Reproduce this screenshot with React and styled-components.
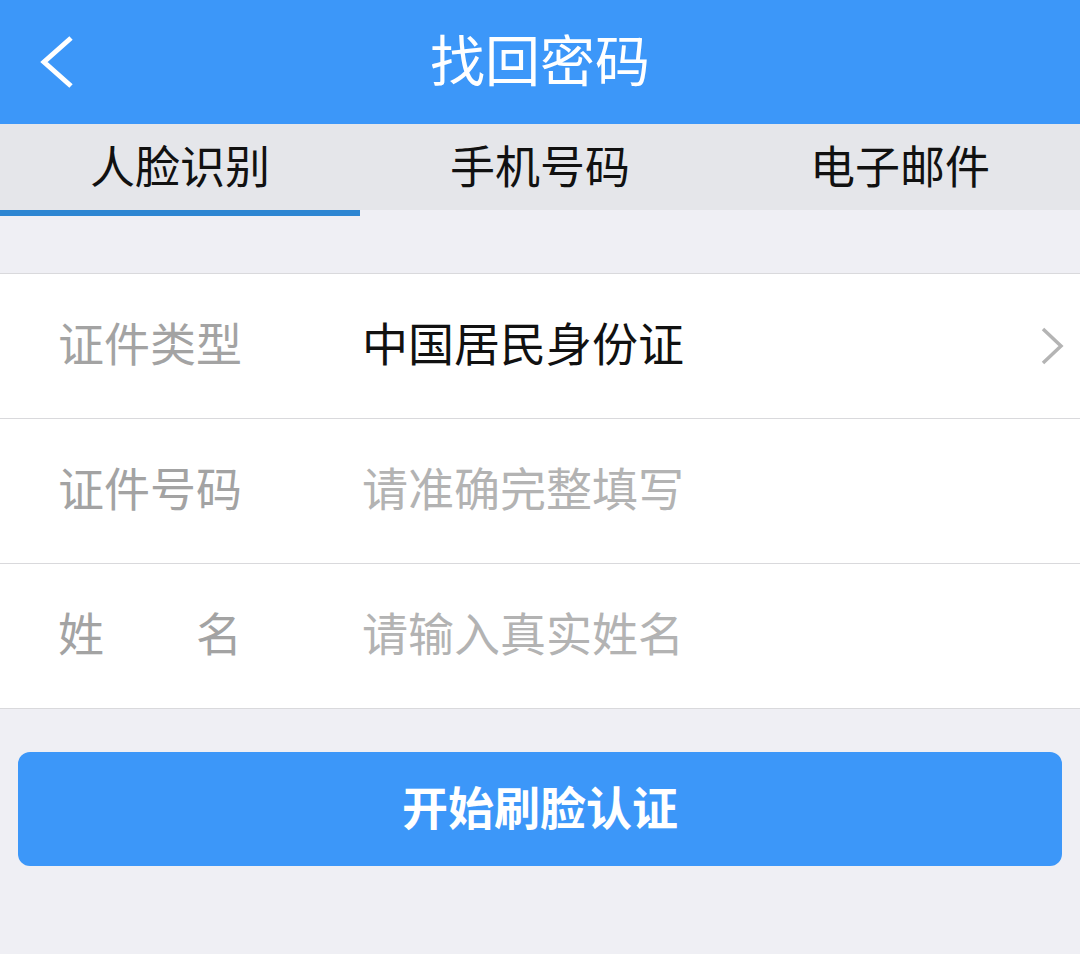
import React, { useState } from "react";
import styled, { createGlobalStyle } from "styled-components";

const GlobalStyle = createGlobalStyle`
  html, body {
    margin: 0;
    padding: 0;
    background: #efeff4;
  }
  body {
    font-family: "Noto Sans CJK SC", "Noto Sans", sans-serif;
  }
`;

const tabs = ["人脸识别", "手机号码", "电子邮件"];

const rows = [
  { label: "证件类型", value: "中国居民身份证", arrow: true },
  { label: "证件号码", placeholder: "请准确完整填写" },
  { label: "姓名", placeholder: "请输入真实姓名" },
];

const App = () => {
  const [active, setActive] = useState(0);

  return (
    <StPage>
      <GlobalStyle />
      <StHeader>
        <StBack aria-label="返回">
          <svg width="40" height="56" viewBox="0 0 40 56">
            <polyline
              points="33,4 6,28 33,52"
              fill="none"
              stroke="#fff"
              strokeWidth="5"
              strokeLinecap="butt"
              strokeLinejoin="miter"
            />
          </svg>
        </StBack>
        <StTitle>找回密码</StTitle>
      </StHeader>

      <StTabBar>
        {tabs.map((t, i) => (
          <StTab key={t} $active={i === active} onClick={() => setActive(i)}>
            {t}
          </StTab>
        ))}
      </StTabBar>

      <StForm>
        {rows.map(r => (
          <StRow key={r.label}>
            <StLabel>{r.label}</StLabel>
            {r.value ? (
              <StValue>{r.value}</StValue>
            ) : (
              <StInput type="text" placeholder={r.placeholder} />
            )}
            {r.arrow && (
              <StArrow width="26" height="40" viewBox="0 0 26 40">
                <polyline
                  points="3,3 21,20 3,37"
                  fill="none"
                  stroke="#b4b4b4"
                  strokeWidth="3.5"
                />
              </StArrow>
            )}
          </StRow>
        ))}
      </StForm>

      <StSubmit type="button">开始刷脸认证</StSubmit>
    </StPage>
  );
};

export default App;

const StPage = styled.div`
  width: 1080px;
  min-height: 954px;
  background: #efeff4;
  display: flex;
  flex-direction: column;
`;

const StHeader = styled.header`
  height: 124px;
  background-color: #3c97f9;
  display: flex;
  align-items: center;
  justify-content: center;
  position: relative;
`;

const StBack = styled.button`
  position: absolute;
  left: 38px;
  top: 34px;
  padding: 0;
  border: none;
  background: none;
  display: flex;
  cursor: pointer;
`;

const StTitle = styled.h1`
  margin: 0;
  color: #fff;
  font-size: 55px;
  font-weight: 400;
  line-height: 1;
  padding-bottom: 10px;
`;

const StTabBar = styled.nav`
  display: grid;
  grid-template-columns: repeat(3, 1fr);
  margin-bottom: 57px;
`;

const StTab = styled.div`
  height: 92px;
  box-sizing: border-box;
  padding-bottom: 6px;
  display: flex;
  align-items: center;
  justify-content: center;
  background: #e5e6ea;
  color: #111;
  font-size: 45px;
  line-height: 1;
  cursor: pointer;
  border-bottom: 6px solid ${p => (p.$active ? "#2e86d2" : "#efeff4")};
`;

const StForm = styled.div`
  background: #fff;
  border-top: 1px solid #d9d9dc;
`;

const StRow = styled.div`
  height: 145px;
  box-sizing: border-box;
  display: flex;
  align-items: center;
  padding: 0 14px 10px 58px;
  border-bottom: 1px solid #d9d9dc;
`;

const StLabel = styled.span`
  width: 184px;
  margin-right: 120px;
  color: #a3a3a3;
  font-size: 46px;
  line-height: 1;
  text-align: justify;
  text-align-last: justify;
  flex-shrink: 0;
`;

const StValue = styled.span`
  flex: 1;
  color: #111;
  font-size: 46px;
  line-height: 1;
`;

const StArrow = styled.svg`
  margin-top: 10px;
`;

const StInput = styled.input`
  flex: 1;
  border: none;
  outline: none;
  padding: 0;
  background: transparent;
  font-family: "Noto Sans CJK SC", "Noto Sans", sans-serif;
  font-size: 46px;
  color: #111;

  &::placeholder {
    color: #b3b3b3;
  }
`;

const StSubmit = styled.button`
  margin: 43px 18px 0;
  height: 114px;
  padding: 0 0 8px;
  border: none;
  border-radius: 12px;
  background: #3c97f9;
  color: #fff;
  font-family: "Noto Sans CJK SC", "Noto Sans", sans-serif;
  font-size: 46px;
  font-weight: 700;
  cursor: pointer;
`;
